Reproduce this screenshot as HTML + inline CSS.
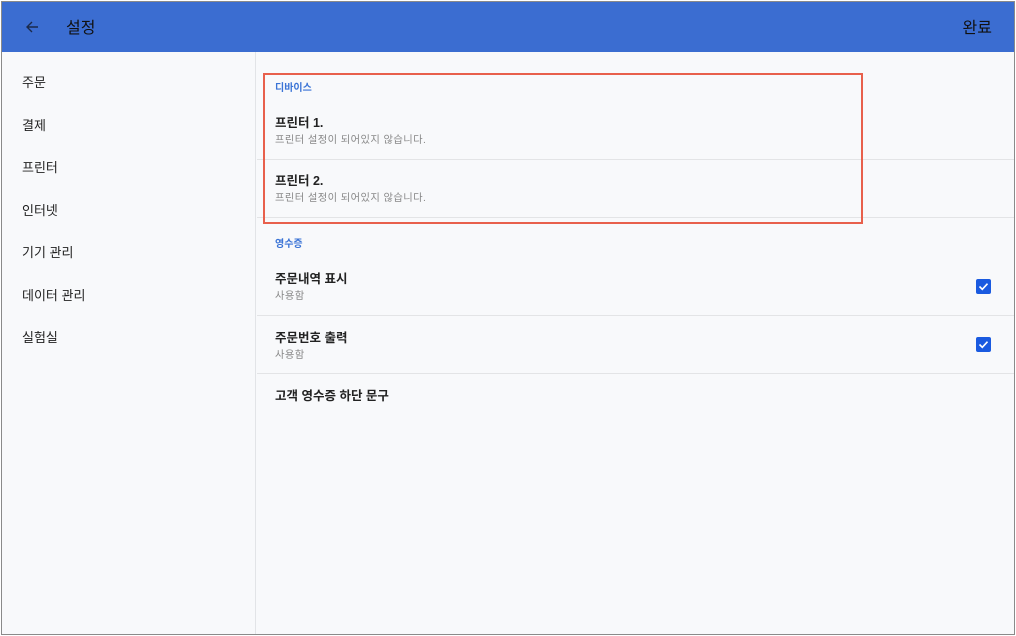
<!DOCTYPE html>
<html><head><meta charset="utf-8"><style>
*{margin:0;padding:0;box-sizing:border-box}
body{width:1016px;height:636px;background:#fff;font-family:"Liberation Sans","Noto Sans CJK KR",sans-serif;position:relative;overflow:hidden}
.frame{position:absolute;left:1px;top:1px;width:1014px;height:634px;border:1px solid #8a8a8a;background:#f8f9fb;overflow:hidden}
.hdr{position:absolute;left:0;top:0;right:0;height:50px;background:#3b6dd1;color:#111}
.hdr .t{position:absolute;left:64px;top:12px;font-size:16px}
.hdr .d{position:absolute;right:22px;top:12px;font-size:16px}
.side{position:absolute;left:0;top:50px;width:254px;bottom:0;border-right:1px solid #e2e4e7}
.side div{position:absolute;left:20px;font-size:13px;color:#222}
.abs{position:absolute}
.line{position:absolute;left:255px;right:0;height:1px;background:#e3e4e6}
.sec{position:absolute;left:273px;font-size:10px;color:#3b74d6;font-weight:bold}
.ti{position:absolute;left:273px;font-size:12.5px;color:#222;font-weight:bold}
.su{position:absolute;left:273px;font-size:10.3px;color:#888;letter-spacing:0.4px}
.cb{position:absolute;left:974px;width:15px;height:15px;background:#1a5ae0;border-radius:2px}
</style></head><body>
<div class="frame">
<div class="hdr">
<svg class="abs" style="left:22px;top:17px" width="16" height="16" viewBox="0 0 16 16"><path d="M14 8H3M8 3L3 8l5 5" stroke="#1b2a4a" stroke-width="1.4" fill="none"/></svg>
<div class="t">설정</div><div class="d">완료</div></div>
<div class="side">
<div style="top:20px">주문</div><div style="top:63px">결제</div><div style="top:105px">프린터</div><div style="top:148px">인터넷</div><div style="top:190px">기기 관리</div><div style="top:233px">데이터 관리</div><div style="top:275px">실험실</div>
</div>
<div class="line" style="top:157px"></div>
<div class="line" style="top:215px"></div>
<div class="line" style="top:313px"></div>
<div class="line" style="top:371px"></div>
<div class="abs" style="left:261px;top:71px;width:600px;height:151px;border:2px solid #e8604c"></div>
<div class="sec" style="top:77px">디바이스</div>
<div class="ti" style="top:110px">프린터 1.</div>
<div class="su" style="top:129px">프린터 설정이 되어있지 않습니다.</div>
<div class="ti" style="top:168px">프린터 2.</div>
<div class="su" style="top:187px">프린터 설정이 되어있지 않습니다.</div>
<div class="sec" style="top:233px">영수증</div>
<div class="ti" style="top:266px">주문내역 표시</div>
<div class="su" style="top:285px">사용함</div>
<div class="ti" style="top:325px">주문번호 출력</div>
<div class="su" style="top:344px">사용함</div>
<div class="ti" style="top:383px">고객 영수증 하단 문구</div>
<div class="cb" style="top:277px"><svg width="15" height="15" viewBox="0 0 15 15"><path d="M3.5 7.5l2.8 2.8 5.2-5.6" stroke="#fff" stroke-width="1.6" fill="none"/></svg></div>
<div class="cb" style="top:335px"><svg width="15" height="15" viewBox="0 0 15 15"><path d="M3.5 7.5l2.8 2.8 5.2-5.6" stroke="#fff" stroke-width="1.6" fill="none"/></svg></div>
</div>
</body></html>
